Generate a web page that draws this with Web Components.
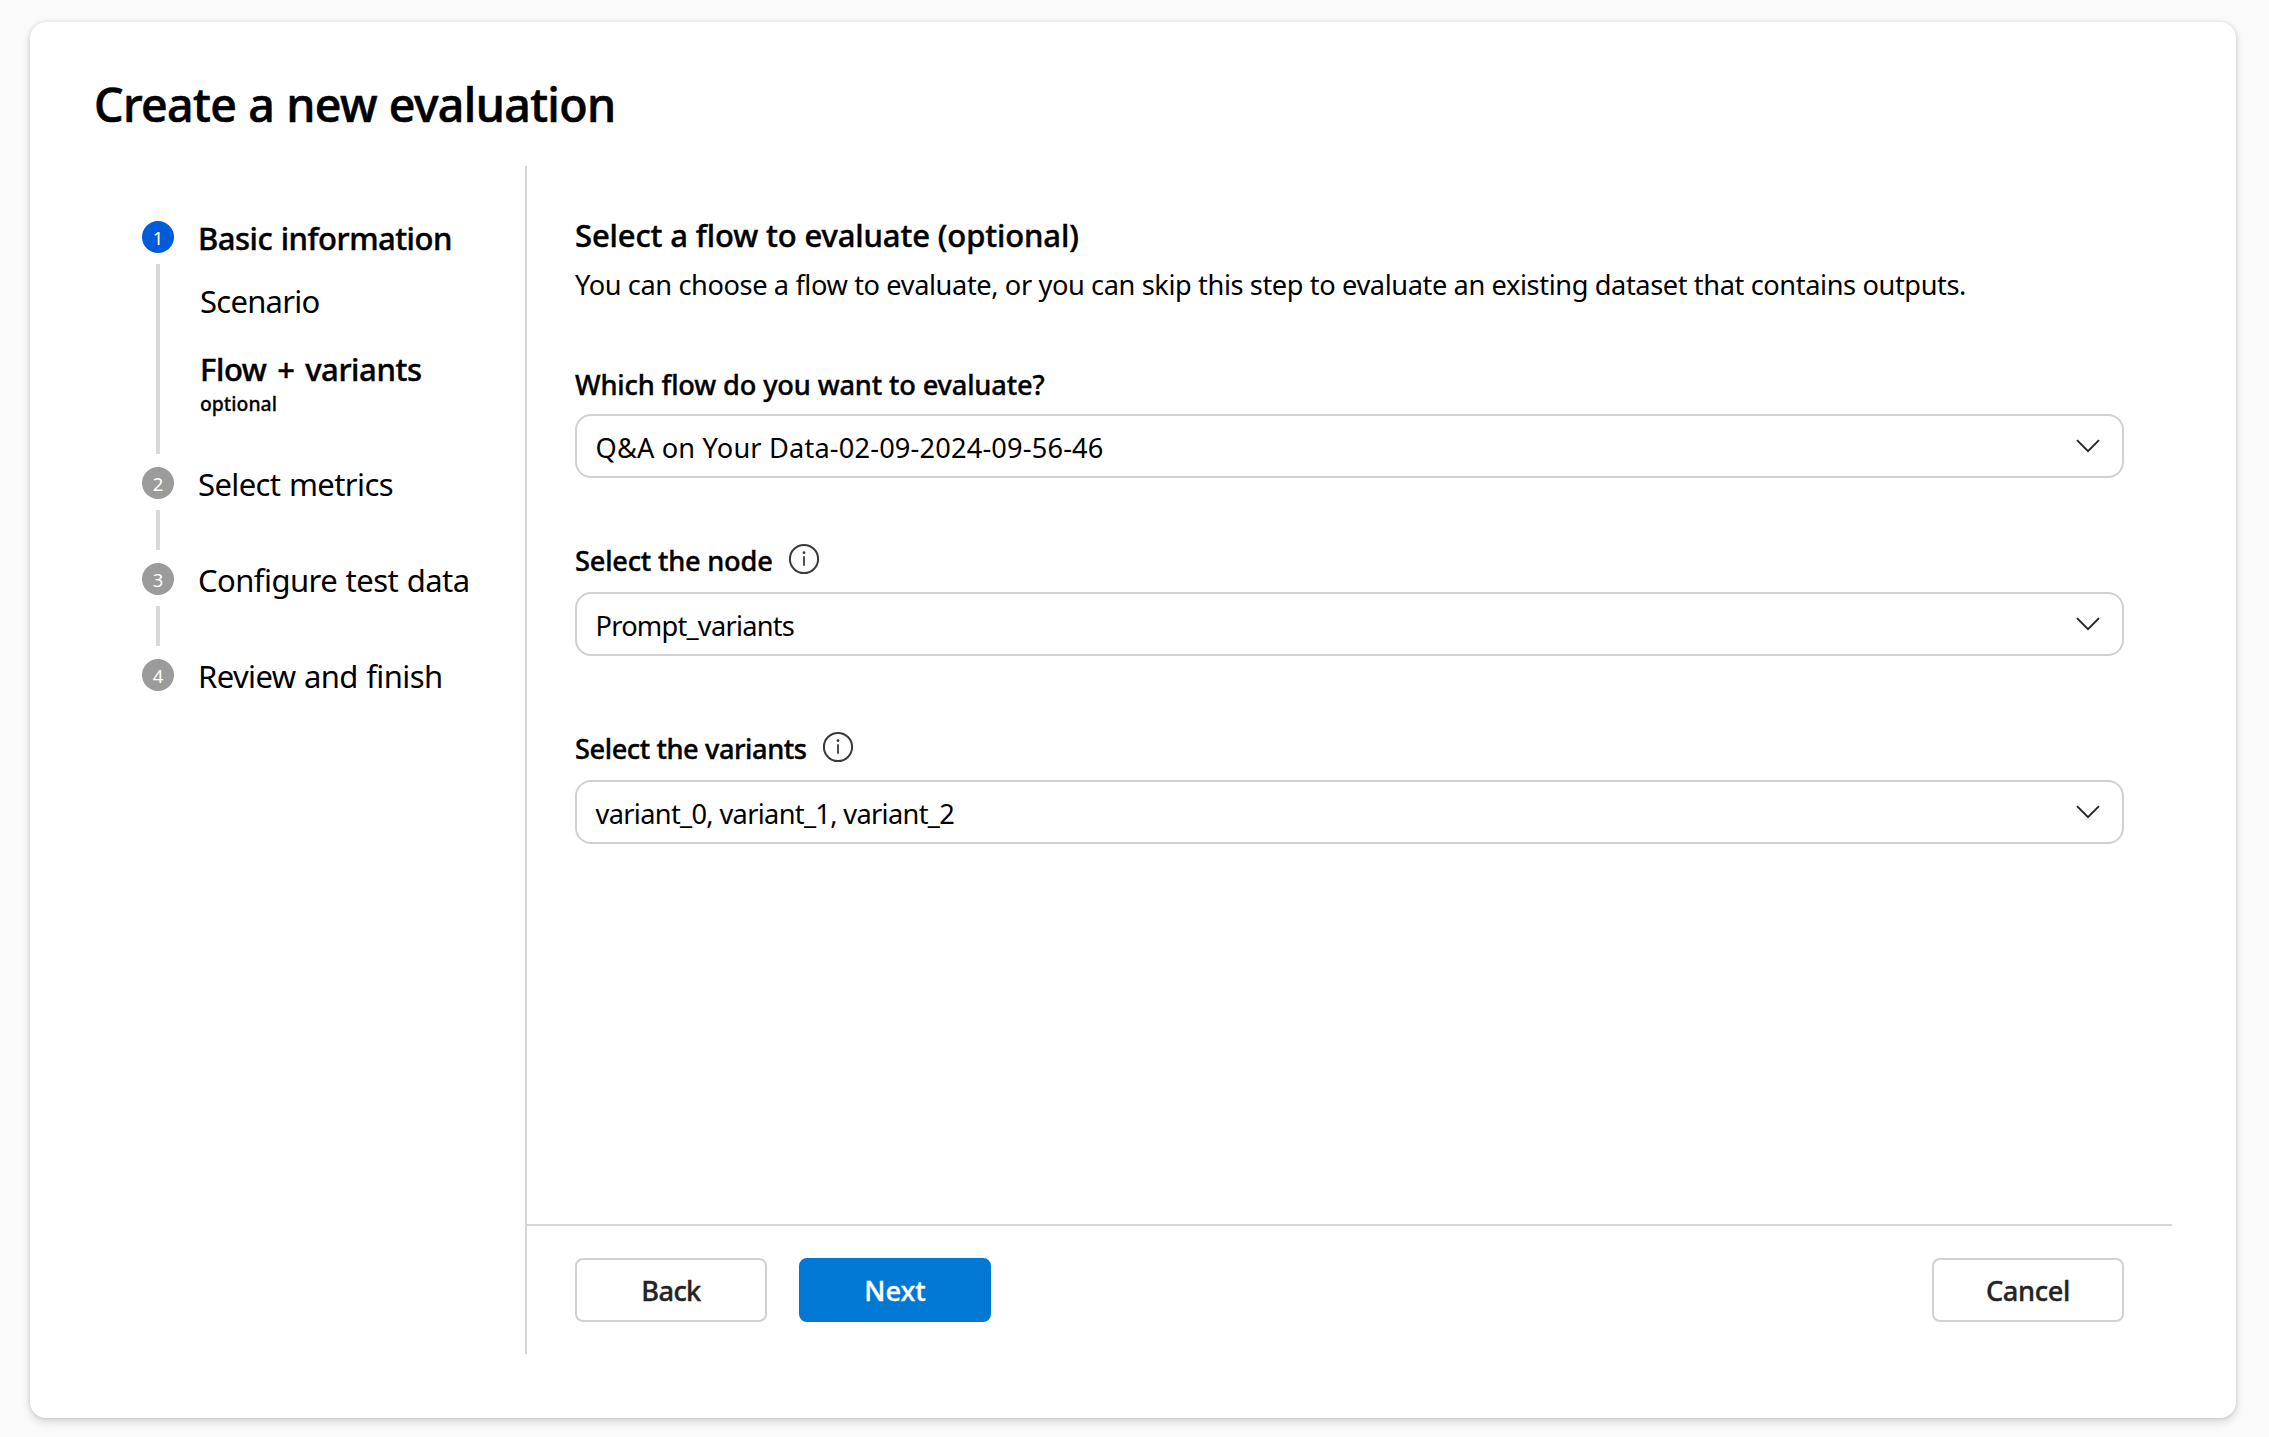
<!DOCTYPE html>
<html lang="en">
<head>
<meta charset="utf-8">
<title>Create a new evaluation</title>
<style>
  html, body { height: 100%; }
  body { margin: 0; background: #fafafa; color: #000; font-family: "Noto Sans", "Open Sans", sans-serif; }
</style>
</head>
<body>
<evaluation-wizard></evaluation-wizard>

<script>
const define = (name, html, setup) => {
  const template = document.createElement('template');
  template.innerHTML = html;
  customElements.define(name, class extends HTMLElement {
    constructor() {
      super();
      this.attachShadow({ mode: 'open' }).append(template.content.cloneNode(true));
    }
    connectedCallback() { if (setup) setup(this, this.shadowRoot); }
  });
};

/* A single line of text: size, line height, tracking and word spacing in px. */
define('ui-text', `
  <style>
    :host { display: block; white-space: nowrap; font-weight: 400; }
    :host([strong]) { font-weight: 500; -webkit-text-stroke: 0.014em currentColor; }
  </style>
  <slot></slot>`,
  host => {
    host.style.fontSize = host.getAttribute('size') + 'px';
    host.style.lineHeight = host.getAttribute('line') + 'px';
    host.style.letterSpacing = (host.getAttribute('track') || 0) + 'px';
    host.style.wordSpacing = (host.getAttribute('words') || 0) + 'px';
  });

define('info-icon', `
  <style>:host { display: block; width: 32px; height: 32px; } svg { display: block; }</style>
  <svg width="32" height="32" viewBox="0 0 32 32" fill="none">
    <circle cx="16" cy="16" r="14.1" stroke="#3b3a39" stroke-width="2"/>
    <path d="M16 13.2V22.8" stroke="#3b3a39" stroke-width="1.8"/>
    <circle cx="16" cy="9.7" r="1.4" fill="#3b3a39"/>
  </svg>`);

define('select-field', `
  <style>
    :host { display: flex; align-items: center; justify-content: space-between; box-sizing: border-box;
            height: 64px; padding: 0 22px 0 18.5px; border: 2px solid #d1d1d1; border-radius: 16px; background: #fff; }
    ::slotted(ui-text) { padding-top: 3px; }
    svg { display: block; }
  </style>
  <slot></slot>
  <svg width="24" height="16" viewBox="0 0 24 16" fill="none">
    <path d="M1 2.2L12 13.2L23 2.2" stroke="#242424" stroke-width="1.9"/>
  </svg>`);

define('ui-button', `
  <style>
    :host { display: flex; align-items: center; justify-content: center; box-sizing: border-box;
            width: 192px; height: 64px; border: 2px solid #d1d1d1; border-radius: 8px; background: #fff; color: #242424; }
    :host([primary]) { border-color: #0078d4; background: #0078d4; color: #fff; }
    ::slotted(ui-text) { padding-top: 2px; }
  </style>
  <slot></slot>`);

define('wizard-step', `
  <style>
    :host { display: flex; gap: 24px; height: 96px; --dot: #9b9b9b; }
    :host([tall]) { height: 246px; }
    :host([current]) { --dot: #005bd9; }
    .rail { display: flex; flex-direction: column; align-items: center; width: 32px; }
    .dot { display: flex; align-items: center; justify-content: center; box-sizing: border-box; width: 32px; height: 32px;
           padding-top: 1px; border-radius: 50%; background: var(--dot); color: #fff; }
    .line { flex: 1; width: 4px; margin: 11px 0 13px; background: #d9d9d9; }
    :host([last]) .line { display: none; }
  </style>
  <div class="rail"><div class="dot"><ui-text size="18.5" line="30"></ui-text></div><div class="line"></div></div>
  <div><slot></slot></div>`,
  (host, root) => { root.querySelector('ui-text').textContent = host.getAttribute('number'); });

define('wizard-steps', `
  <style>
    :host { display: flex; flex-direction: column; box-sizing: border-box; width: 431px; padding: 55px 0 0 48px; }
    .sub { padding-left: 2px; }
    .first { margin-top: 29px; }
    .second { margin-top: 34px; }
    .note { margin-top: 5px; }
  </style>
  <wizard-step number="1" current tall>
    <ui-text strong size="31" line="34" track="-0.5" words="1">Basic information</ui-text>
    <div class="sub">
      <ui-text class="first" size="31" line="34" track="-0.74">Scenario</ui-text>
      <ui-text class="second" strong size="31" line="34" track="-0.4" words="3">Flow + variants</ui-text>
      <ui-text class="note" strong size="19.4" line="26">optional</ui-text>
    </div>
  </wizard-step>
  <wizard-step number="2"><ui-text size="31" line="34" track="-0.6" words="1">Select metrics</ui-text></wizard-step>
  <wizard-step number="3"><ui-text size="31" line="34" track="-0.55" words="1">Configure test data</ui-text></wizard-step>
  <wizard-step number="4" last><ui-text size="31" line="34" track="-0.6" words="1">Review and finish</ui-text></wizard-step>`);

define('form-field', `
  <style>
    :host { display: block; }
    .label { display: flex; gap: 15px; height: 40px; margin-bottom: var(--label-gap, 11px); }
    ::slotted(info-icon) { margin-top: 2px; }
  </style>
  <div class="label"><slot name="label"></slot><slot name="info"></slot></div>
  <slot></slot>`);

define('flow-form', `
  <style>
    :host { display: flex; flex-direction: column; box-sizing: border-box; padding: 47px 48px 0; }
    .description { margin-top: 8px; }
    .flow { margin-top: 60px; --label-gap: 9px; }
    .node { margin-top: 63px; }
    .variants { margin-top: 73px; }
  </style>
  <ui-text strong size="31" line="44" track="-0.13">Select a flow to evaluate (optional)</ui-text>
  <ui-text class="description" size="27.2" line="40" track="-0.39">You can choose a flow to evaluate, or you can skip this step to evaluate an existing dataset that contains outputs.</ui-text>
  <form-field class="flow">
    <ui-text slot="label" strong size="27.2" line="40" track="-0.14">Which flow do you want to evaluate?</ui-text>
    <select-field><ui-text size="27.2" line="36" track="0.17">Q&amp;A on Your Data-02-09-2024-09-56-46</ui-text></select-field>
  </form-field>
  <form-field class="node">
    <ui-text slot="label" strong size="27.2" line="40" track="-0.2">Select the node</ui-text>
    <info-icon slot="info"></info-icon>
    <select-field><ui-text size="27.2" line="36" track="-0.75">Prompt_variants</ui-text></select-field>
  </form-field>
  <form-field class="variants">
    <ui-text slot="label" strong size="27.2" line="40" track="-0.41">Select the variants</ui-text>
    <info-icon slot="info"></info-icon>
    <select-field><ui-text size="27.2" line="36" track="-0.66">variant_0, variant_1, variant_2</ui-text></select-field>
  </form-field>`);

define('wizard-footer', `
  <style>
    :host { display: flex; gap: 32px; box-sizing: border-box; height: 130px; padding: 32px 48px 0; border-top: 2px solid #d6d6d6; }
    .cancel { margin-left: auto; }
  </style>
  <ui-button><ui-text strong size="27.2" line="40" track="-0.65">Back</ui-text></ui-button>
  <ui-button primary><ui-text strong size="27.2" line="40">Next</ui-text></ui-button>
  <ui-button class="cancel"><ui-text strong size="27.2" line="40" track="-0.34">Cancel</ui-text></ui-button>`);

define('evaluation-wizard', `
  <style>
    :host { display: flex; box-sizing: border-box; height: 1437px; padding: 22px 33px 19px 30px; overflow: hidden; }
    .card { display: flex; flex-direction: column; flex: 1; box-sizing: border-box; padding: 50px 64px 64px; border-radius: 16px;
            background: #fff; box-shadow: 0 0 4px rgba(0,0,0,.12), 0 4px 8px rgba(0,0,0,.14); }
    .body { display: flex; height: 1188px; margin-top: 30px; }
    .panel { display: flex; flex-direction: column; flex: 1; border-left: 2px solid #d6d6d6; }
    wizard-footer { margin-top: auto; }
  </style>
  <div class="card">
    <ui-text strong size="46.5" line="64" track="-0.64" words="0.6">Create a new evaluation</ui-text>
    <div class="body">
      <wizard-steps></wizard-steps>
      <div class="panel">
        <flow-form></flow-form>
        <wizard-footer></wizard-footer>
      </div>
    </div>
  </div>`);
</script>
</body>
</html>
